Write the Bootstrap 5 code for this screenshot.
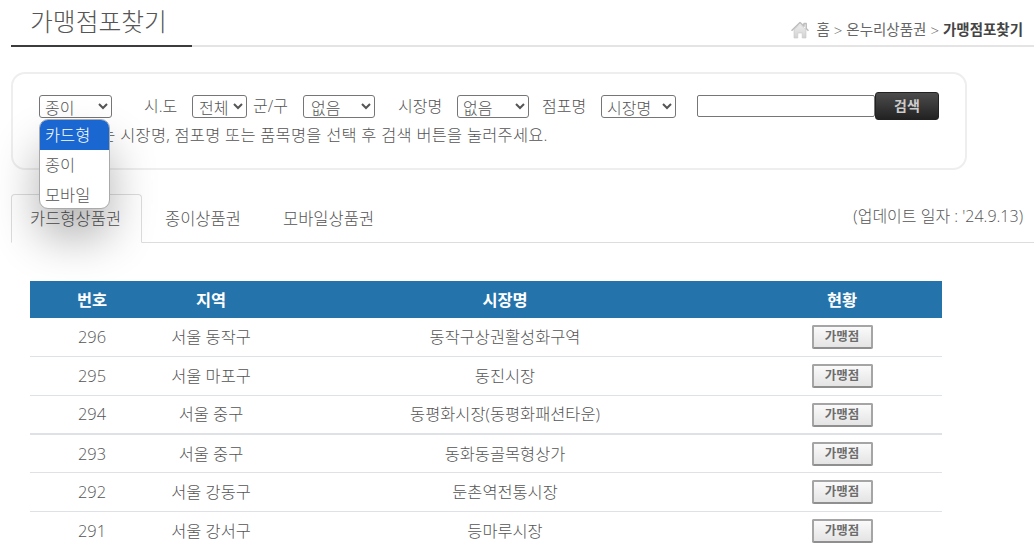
<!DOCTYPE html>
<html lang="ko">
<head>
<meta charset="utf-8">
<title>가맹점포찾기</title>
<link href="https://cdn.jsdelivr.net/npm/bootstrap@5.3.0/dist/css/bootstrap.min.css" rel="stylesheet">
<style>
html,body{height:546px;overflow:hidden;background:#fff}
body{font-family:"Open Sans","Noto Sans CJK KR",sans-serif;font-weight:300;color:#555;font-size:16px;line-height:22px}
.top-bar{height:47px;border-bottom:2px solid #e4e4e4;margin-left:11px;justify-content:space-between}
.page-title{width:181px;height:47px;margin:0 0 -2px;padding:3px 0 0 19px;border-bottom:2px solid #3c3c3c;font-size:24.8px;line-height:36px;font-weight:300;color:#555}
.crumbs{padding:14px 11px 0 0;height:45px;align-items:center;font-size:14.5px;font-weight:400;color:#666}
.crumbs b{font-weight:700;color:#444}
.crumbs svg{margin-right:7px}
.crumbs i{font-style:normal;margin:0 4px;font-weight:300;font-size:15px}
.search-box{width:956px;height:98px;margin:25px 0 0 11px;border:2px solid #eee;border-radius:14px;padding:18px 26px 0}
.search-line{height:28px;align-items:center;white-space:nowrap}
.search-line label{margin:0;color:#555}
.search-line select{height:23px;font:inherit;line-height:20px;color:#555;background:#fff;border:1px solid #767676;border-radius:3px;padding:0 0 0 1px}
.search-line input{width:178px;height:22px;margin-left:21px;border:1px solid #767676;border-radius:2px;padding:0;background:#fff}
.s-type{width:73px}.s-sido{width:55px;margin-left:14px}.s-gu{width:72px;margin-left:14px}.s-mkt{width:72px;margin-left:15px}.s-store{width:75px;margin-left:14px}
.search-line .s-gu{padding-left:3px}
.search-line .s-sido{padding-left:2px}
.lab-sido{width:34px;margin-left:32px!important}.lab-gu{width:36px;margin-left:6px!important}.lab-mkt{width:44px;margin-left:23px!important}.lab-store{width:45px;margin-left:13px!important}
.search-btn{width:64px;height:28px;padding:0;border:1px solid #222;border-radius:3px;background:linear-gradient(#4c4c4c,#222);color:#ccc;font-size:14px;font-weight:700;line-height:24px}
.help-line{margin:4px 0 0;letter-spacing:.26px;font-size:16.4px;color:#555;white-space:nowrap}
.popup{position:absolute;left:0;top:24px;width:71px;height:90px;background:#fff;border:1px solid #aaa;border-radius:9px;overflow:hidden;box-shadow:0 28px 46px rgba(0,0,0,.3);z-index:5}
.popup div{height:30px;line-height:29px;padding-left:5px;font-size:16.4px;color:#555}
.popup .sel{background:#1a67d2;color:#fff}
.tab-row{margin:24px 0 0 11px;height:49px;border-bottom:1px solid #ddd;justify-content:space-between}
.tab-list{margin:0;padding:0;list-style:none}
.tab-item{height:48px;padding:13px 0 0;font-size:16.5px;line-height:22px;color:#555;border:1px solid transparent;white-space:nowrap}
.tab-item.active-tab{width:131px;padding-left:18px;height:49px;margin-bottom:-1px;background:#fff;border:1px solid #ddd;border-bottom-color:#fff;border-radius:4px 4px 0 0}
.tab-two{margin-left:22px;width:118px}
.update-note{padding:11px 11px 0 0;color:#555;font-size:16px}
.list-wrap{width:912px;margin:38px 0 0 30px}
.list-wrap table{table-layout:fixed;margin:0;color:#555}
.list-wrap th{height:37px;padding:0;background:#2474ab;color:#fff;font-size:16.4px;font-weight:700;text-align:center;vertical-align:middle;border:0;box-shadow:none}
.list-wrap td{height:38.7px;padding:0;text-align:center;vertical-align:middle;font-size:16.4px;color:#555;border-bottom:1px solid #dee2e6;box-shadow:none}
.list-wrap tr.thick td{border-bottom-width:2px}
.store-btn{display:inline-block;width:61px;height:24px;padding:0;vertical-align:middle;border:2px solid #a5a5a5;border-bottom-color:#8f8f8f;border-radius:2px;background:linear-gradient(#fafafa,#e4e4e4);color:#6c6c6c;font-size:12.5px;font-weight:700;line-height:20px;white-space:nowrap}
</style>
</head>
<body>
<div class="d-flex top-bar">
  <h1 class="page-title">가맹점포찾기</h1>
  <div class="d-flex crumbs">
    <svg width="18" height="18" viewBox="0 0 18 18"><defs><linearGradient id="hb" x1="0" y1="0" x2="0" y2="1"><stop offset="0" stop-color="#ededed"/><stop offset="1" stop-color="#d2d2d2"/></linearGradient></defs><path d="M3 8.5 9 3.5l6 5V17h-3.8v-5H6.800v5H3z" fill="url(#hb)" stroke="#c8c8c8" stroke-width=".6"/><path d="M.5 9.800 9 1.500l4 3.800V2.500h2.200v5L17.500 9.800" fill="none" stroke="#bdbdbd" stroke-width="1.500" stroke-linejoin="round"/></svg>
    <span>홈</span><i>&gt;</i><span>온누리상품권</span><i>&gt;</i><b>가맹점포찾기</b>
  </div>
</div>

<form class="search-box">
  <div class="d-flex search-line">
    <div class="position-relative d-flex">
      <select class="s-type"><option>종이</option></select>
      <div class="popup"><div class="sel">카드형</div><div>종이</div><div>모바일</div></div>
    </div>
    <label class="lab-sido">시.도</label>
    <select class="s-sido"><option>전체</option></select>
    <label class="lab-gu">군/구</label>
    <select class="s-gu"><option>없음</option></select>
    <label class="lab-mkt">시장명</label>
    <select class="s-mkt"><option>없음</option></select>
    <label class="lab-store">점포명</label>
    <select class="s-store"><option>시장명</option></select>
    <input type="text">
    <button type="button" class="search-btn">검색</button>
  </div>
  <p class="help-line">찾고계시는 시장명, 점포명 또는 품목명을 선택 후 검색 버튼을 눌러주세요.</p>
</form>

<div class="d-flex tab-row">
  <ul class="d-flex tab-list">
    <li class="tab-item active-tab">카드형상품권</li>
    <li class="tab-item tab-two">종이상품권</li>
    <li class="tab-item">모바일상품권</li>
  </ul>
  <div class="update-note">(업데이트 일자 : '24.9.13)</div>
</div>

<div class="list-wrap">
  <table class="table">
    <colgroup><col style="width:124px"><col style="width:114px"><col style="width:474px"><col style="width:200px"></colgroup>
    <thead><tr><th>번호</th><th>지역</th><th>시장명</th><th>현황</th></tr></thead>
    <tbody>
      <tr><td>296</td><td>서울 동작구</td><td>동작구상권활성화구역</td><td><button type="button" class="store-btn">가맹점</button></td></tr>
      <tr><td>295</td><td>서울 마포구</td><td>동진시장</td><td><button type="button" class="store-btn">가맹점</button></td></tr>
      <tr class="thick"><td>294</td><td>서울 중구</td><td>동평화시장(동평화패션타운)</td><td><button type="button" class="store-btn">가맹점</button></td></tr>
      <tr><td>293</td><td>서울 중구</td><td>동화동골목형상가</td><td><button type="button" class="store-btn">가맹점</button></td></tr>
      <tr><td>292</td><td>서울 강동구</td><td>둔촌역전통시장</td><td><button type="button" class="store-btn">가맹점</button></td></tr>
      <tr><td>291</td><td>서울 강서구</td><td>등마루시장</td><td><button type="button" class="store-btn">가맹점</button></td></tr>
    </tbody>
  </table>
</div>
<script src="https://cdn.jsdelivr.net/npm/bootstrap@5.3.0/dist/js/bootstrap.bundle.min.js"></script>
</body>
</html>
